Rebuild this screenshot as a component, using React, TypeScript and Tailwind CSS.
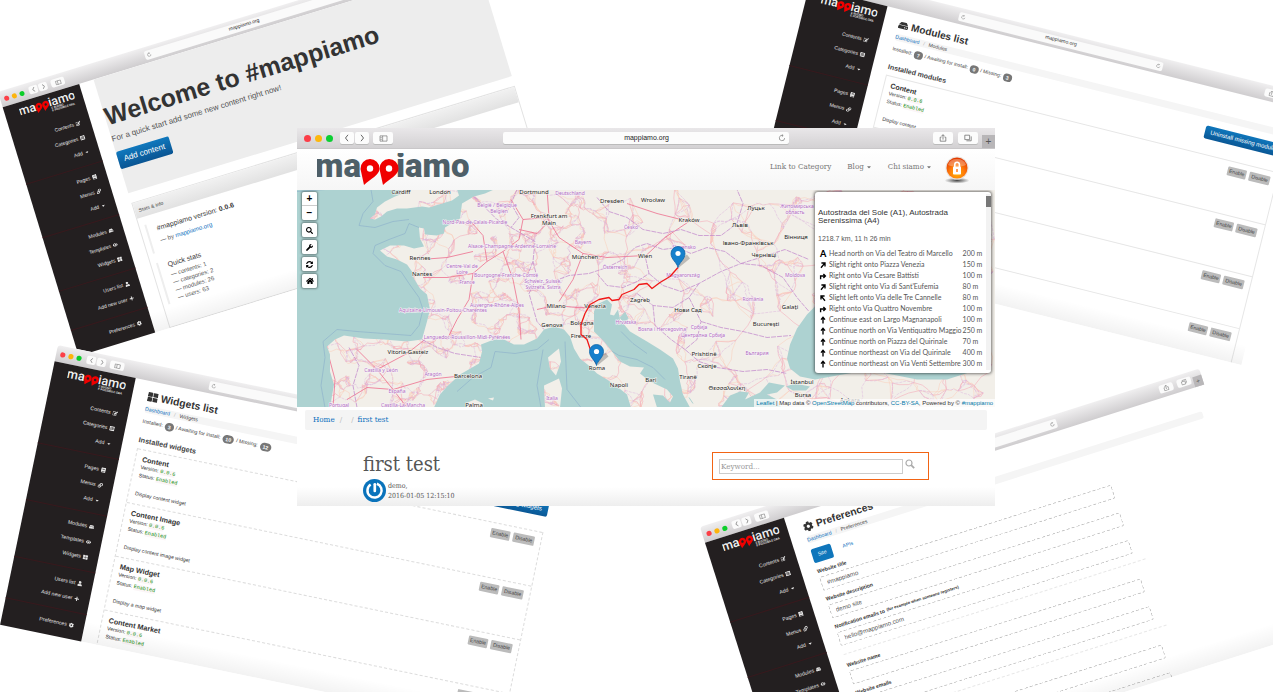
import React from "react";
import {
  FaBook,
  FaCaretDown,
  FaCog,
  FaEdit,
  FaEye,
  FaHdd,
  FaHome,
  FaLink,
  FaListAlt,
  FaPlus,
  FaSearch,
  FaSyncAlt,
  FaThLarge,
  FaUser,
  FaWrench,
} from "react-icons/fa";

/* ---------- shared pieces ---------- */

function Logo({ className, tagline = false }: { className: string; tagline?: boolean }) {
  return (
    <svg viewBox="0 0 152 40" className={className} role="img" aria-label="mappiamo">
      <g fontFamily="Roboto, sans-serif" fontSize="33" fontWeight={tagline ? 500 : 900} fill="currentColor">
        <text x="-2" y="24">ma</text>
        <text x={tagline ? 80 : 79} y="24">iamo</text>
      </g>
      <g fill="#f00000">
        <path d="M53 6a9.500 9.500 0 0 1 9.500 9.500c0 7-9 10-15.500 16.500L43.500 16A9.500 9.500 0 0 1 53 6z" />
        <path d="M72 6a9.500 9.500 0 0 1 9.500 9.500c0 7-9 10-15.500 16.500L62.500 16A9.500 9.500 0 0 1 72 6z" />
      </g>
      <circle cx="53" cy="15.500" r="3.200" fill={tagline ? "#231f20" : "#fff"} />
      <circle cx="72" cy="15.500" r="3.200" fill={tagline ? "#231f20" : "#fff"} />
      {tagline && (
        <g fontFamily="Roboto, sans-serif" fontSize="8" fontWeight="500" fill="currentColor">
          <text x="84" y="32">E BUONO</text>
          <text x="84" y="39">E POSSIBILE ORA</text>
        </g>
      )}
    </svg>
  );
}

function Reload({ className }: { className: string }) {
  return (
    <svg viewBox="0 0 12 12" className={className} fill="none" stroke="#888" strokeWidth="1.200">
      <path d="M10 6.200A4 4 0 1 1 7.500 2.300M5.800 .6l2 1.700-2 1.700" />
    </svg>
  );
}

function SmallChrome() {
  const btn = "flex h-2 items-center justify-center rounded-[2px] bg-[#fbfbfb] text-[#888]";
  return (
    <div className="flex h-4 shrink-0 items-center rounded-t-[3px] bg-linear-to-b from-[#f0eff0] to-[#cfcdcf] pl-1">
      <span className="size-[5px] rounded-full bg-[#fc4048]" />
      <span className="ml-[3px] size-[5px] rounded-full bg-[#fdb40c]" />
      <span className="ml-[3px] size-[5px] rounded-full bg-[#0cce2a]" />
      <div className="ml-[5px] flex gap-px">
        <button aria-label="Back" className={btn + " w-[9px]"}>
          <svg viewBox="0 0 8 8" className="size-[6px]" fill="none" stroke="currentColor"><path d="M5 1L2.500 4 5 7" /></svg>
        </button>
        <button aria-label="Forward" className={btn + " w-[9px]"}>
          <svg viewBox="0 0 8 8" className="size-[6px]" fill="none" stroke="currentColor"><path d="M3 1l2.500 3L3 7" /></svg>
        </button>
      </div>
      <button aria-label="Sidebar" className={btn + " ml-1 w-[14px]"}>
        <svg viewBox="0 0 10 8" className="h-[5px] w-[7px]" fill="none" stroke="currentColor"><path d="M1 1h8v6H1zM4 1v6" /></svg>
      </button>
      <div className="ml-[84px] flex h-[9px] w-[208px] items-center justify-between rounded-[2px] bg-[#fafafa] px-[2px] text-[5px] text-[#333]">
        <Reload className="size-[5px]" />
        mappiamo.org
        <Reload className="size-[5px]" />
      </div>
      <button aria-label="Share" className={btn + " ml-auto w-[14px]"}>
        <svg viewBox="0 0 10 10" className="size-[6px]" fill="none" stroke="currentColor"><path d="M3 4H1.500v5h7V4H7M5 7V1M3 2.500L5 1l2 1.500" /></svg>
      </button>
      <button aria-label="Tabs" className={btn + " ml-1 w-[14px]"}>
        <svg viewBox="0 0 10 10" className="size-[6px]" fill="none" stroke="currentColor"><path d="M1 3.500h6v5H1zM3 3V1.500h6v5H7.500" /></svg>
      </button>
      <span className="ml-[2px] flex h-[10px] w-[9px] items-center justify-center self-end bg-[#b9b7b9] text-[6px] text-[#555]">+</span>
    </div>
  );
}

const menu = [
  [
    { label: "Contents", icon: FaEdit },
    { label: "Categories", icon: FaListAlt },
    { label: "Add", icon: FaCaretDown },
  ],
  [
    { label: "Pages", icon: FaBook },
    { label: "Menus", icon: FaLink },
    { label: "Add", icon: FaCaretDown },
  ],
  [
    { label: "Modules", icon: FaHdd },
    { label: "Templates", icon: FaEye },
    { label: "Widgets", icon: FaThLarge },
  ],
  [
    { label: "Users list", icon: FaUser },
    { label: "Add new user", icon: FaPlus },
  ],
  [{ label: "Preferences", icon: FaCog }],
];

function Sidebar() {
  return (
    <nav className="flex w-20 shrink-0 flex-col bg-[#231f20] text-[5px] text-[#e4e4e4]">
      <div className="flex h-[25px] justify-end pt-1 pr-2">
        <Logo tagline className="h-[15px] w-[57px] text-[#f0f0f0]" />
      </div>
      {menu.map((group, i) => (
        <ul key={i} className="border-b border-[#38191d] py-[5px] pr-[10px] last:border-0">
          {group.map(({ label, icon: Icon }) => (
            <li key={label}>
              <a href="#" className="flex h-[15px] items-center justify-end gap-[2px]">
                {label} <Icon className="size-[5px]" />
              </a>
            </li>
          ))}
        </ul>
      ))}
    </nav>
  );
}

function AdminWindow({ className, children }: { className: string; children: React.ReactNode }) {
  return (
    <section className={"absolute flex h-[276px] w-[506px] origin-top-left flex-col bg-white " + className}>
      <SmallChrome />
      <div className="flex min-h-0 flex-1">
        <Sidebar />
        <div className="relative flex min-w-0 flex-1 flex-col overflow-hidden pr-[10px] pl-[15px]">
          {children}
          <div className="pointer-events-none absolute inset-x-0 bottom-0 h-5 bg-linear-to-b from-transparent to-black/5" />
        </div>
      </div>
    </section>
  );
}

function PageHead({ icon, title, crumb }: { icon: React.ReactNode; title: string; crumb: string }) {
  return (
    <header>
      <h2 className="flex h-6 items-center gap-[3px] pt-[5px] text-[10px] leading-3 font-bold text-[#333]">
        {icon}
        {title}
      </h2>
      <div className="flex h-[7px] items-center gap-1 rounded-[2px] bg-[#f5f5f5] text-[5px] leading-[7px] text-[#444]">
        <a href="#" className="text-[#0a6ebd]">Dashboard</a>
        <span className="text-[#bbb]">/</span>
        {crumb}
      </div>
    </header>
  );
}

/* ---------- admin windows ---------- */

function WelcomeWindow() {
  return (
    <AdminWindow className="top-[92px] left-[-2px] rotate-[-17deg]">
      <div className="flex h-[119px] shrink-0 flex-col items-start bg-[#ededed] pt-[26px]">
        <h1 className="text-[25px] leading-[26px] font-bold whitespace-nowrap text-[#333]">Welcome to #mappiamo</h1>
        <p className="mt-[6px] text-[8px] leading-[10px] text-[#555]">For a quick start add some new content right now!</p>
        <button className="mt-2 h-[18px] rounded-[2px] bg-linear-to-b from-[#1078bd] to-[#0a5593] px-[6px] text-[8px] text-white">
          Add content
        </button>
      </div>
      <div className="mt-[10px] flex flex-1 flex-col border border-[#e3e3e3] bg-white">
        <div className="h-4 bg-linear-to-b from-[#f1f1f1] to-[#e2e2e2] pl-1 text-[5px] leading-4 text-[#444]">Stats &amp; info</div>
        <div className="mt-2 ml-[5px] h-[30px] border-l-2 border-[#eee] pt-[2px] pl-[9px] text-[6px] text-[#555]">
          <h3 className="text-[7px] leading-[10px] text-[#333]">
            #mappiamo version: <b>0.0.6</b>
          </h3>
          <p className="mt-[3px] leading-2">
            — by <a href="#" className="text-[#0a6ebd]">mappiamo.org</a>
          </p>
        </div>
        <div className="mt-[10px] ml-[5px] border-l-2 border-[#eee] pl-[9px] text-[6px] leading-2 text-[#555]">
          <h3 className="mb-[2px] text-[7px] leading-[9px] text-[#333]">Quick stats</h3>
          <ul>
            <li>— contents: 1</li>
            <li>— categories: 2</li>
            <li>— modules: 26</li>
            <li>— users: 63</li>
          </ul>
        </div>
      </div>
    </AdminWindow>
  );
}

type ListProps = {
  className: string;
  kind: string;
  icon: React.ReactNode;
  counts: number[];
  items: { name: string; text: string }[];
  dashed?: boolean;
};

function ListWindow({ className, kind, icon, counts, items, dashed = false }: ListProps) {
  const line = dashed ? "border-dashed border-[#ddd]" : "border-[#e6e6e6]";
  const badge = "rounded-full bg-[#777] px-[3px] text-[5px] leading-2 font-bold text-white";
  return (
    <AdminWindow className={className}>
      <PageHead icon={icon} title={kind + " list"} crumb={kind} />
      <div className="flex h-[35px] shrink-0 justify-between">
        <div className="pt-1">
          <p className="flex h-[10px] items-center gap-[2px] text-[5px] text-[#444]">
            Installed: <span className={badge}>{counts[0]}</span> / Awaiting for install:{" "}
            <span className={badge}>{counts[1]}</span> / Missing: <span className={badge}>{counts[2]}</span>
          </p>
          <h3 className="mt-2 text-[7px] leading-[10px] font-bold text-[#444]">Installed {kind.toLowerCase()}</h3>
        </div>
        <button className="mt-[7px] h-[13px] rounded-[2px] bg-linear-to-b from-[#0f76bb] to-[#0a5896] px-[6px] text-[6px] text-white">
          Uninstall missing {kind.toLowerCase()}
        </button>
      </div>
      <ul className={"flex flex-1 flex-col border-x " + line}>
        {items.map((item) => (
          <li key={item.name} className={"flex h-[53px] shrink-0 items-start justify-between border-t pt-[5px] pr-[6px] pl-[6px] " + line}>
            <div className="text-[5px] leading-[7px] text-[#333]">
              <h4 className="text-[7px] leading-2 font-bold">{item.name}</h4>
              <p>Version: <code className="bg-[#fbf5f7] text-[#0a8f0a]">0.0.6</code></p>
              <p>Status: <code className="bg-[#fbf5f7] text-[#0a8f0a]">Enabled</code></p>
              <p className="mt-[10px]">{item.text}</p>
            </div>
            <div className="flex gap-[3px] text-[5px] leading-[9px] text-[#444]">
              <button className="rounded-[1px] bg-[#bbb] px-[2px]">Enable</button>
              <button className="rounded-[1px] bg-[#bbb] px-[2px]">Disable</button>
            </div>
          </li>
        ))}
      </ul>
    </AdminWindow>
  );
}

function Field({ id, label, note, value = "" }: { id: string; label: string; note?: string; value?: string }) {
  return (
    <div className="flex h-7 w-[296px] flex-col">
      <label htmlFor={id} className="flex h-[14px] items-end pb-[3px] text-[5px] leading-[6px] font-bold text-[#333]">
        {label} {note && <span className="ml-[2px] text-[4px]">{note}</span>}
      </label>
      <input id={id} defaultValue={value} className="h-[14px] w-full rounded-[2px] border border-dashed border-[#c4c4c4] bg-transparent px-[5px] text-[6px] text-[#555]" />
    </div>
  );
}

function PreferencesWindow() {
  return (
    <AdminWindow className="top-[527px] left-[700px] scale-[1.035] rotate-[-17.6deg]">
      <PageHead icon={<FaCog className="size-[10px]" />} title="Preferences" crumb="Preferences" />
      <div className="mt-[6px] flex h-[14px] shrink-0 items-stretch text-[5px]">
        <button className="w-5 rounded-[2px] bg-[#0f76bb] text-white">Site</button>
        <button className="ml-[6px] w-5 text-[#0a6ebd]">APIs</button>
      </div>
      <Field id="site-title" label="Website title" value="#mappiamo" />
      <Field id="site-description" label="Website description" value="demo site" />
      <Field id="site-notify" label="Notification emails to" note="(for example when someone registers)" value="hello@mappiamo.com" />
      <hr className="mt-2 mb-[2px] w-[306px] border-dashed border-[#e8e8e8]" />
      <Field id="site-name" label="Website name" />
      <Field id="site-email" label="Website emails" />
      <hr className="mt-2 mb-[2px] w-[306px] border-dashed border-[#e8e8e8]" />
      <Field id="site-language" label="Language" />
      <Field id="site-domain" label="Domain" />
    </AdminWindow>
  );
}

/* ---------- map ---------- */

const LAND =
  "M197 0L188 4 177 7 165 14 163 29 148 38 147 44 140 46 128 45 127 39 122 38 123 49 127 57 117 59 107 56 93 56 83 61 90 67 100 70 110 75 115 82 117 89 123 99 130 105 133 120 130 132 125 150 110 152 87 150 67 149 47 146 38 150 30 157 33 165 33 182 37 195 33 218H137L143 205 150 197 163 185 182 174 185 162 184 155 197 150 207 150 217 155 227 155 240 149 247 140 257 137 267 140 273 147 277 159 283 169 293 177 300 184 310 190 320 197 330 205 334 218H360L356 205 366 206 373 213 376 207 370 200 353 192 343 184 347 178 333 177 323 172 315 162 307 152 297 142 297 132 297 122 300 115 310 110 315 115 313 125 317 126 321 120 323 130 333 142 350 152 363 160 376 169 381 179 383 192 386 205 393 218H698V0z" +
  "M104 0L106 4 98 7 88 12 80 18 78 25 73 29 78 30 84 27 90 22 100 19 110 19 125 17 132 18 145 14 155 11 162 6 160 0z" +
  "M262 159L264 172 259 186 253 179 251 168 257 163z" +
  "M247 196L262 189 265 199 263 218H248z" +
  "M168 214L178 210 186 214 184 218H170zM191 209L197 208 196 211z";

const WATER =
  "M523 112L510 125 500 139 493 155 490 169 493 179 503 187 518 190 540 186 575 180 590 184 620 190 650 190 675 182 690 170 690 112z" +
  "M424 218L433 206 443 202 452 203 448 210 463 203 472 193 488 196 480 203 470 205 480 210 484 218z" +
  "M489 197L498 194 513 197 509 201 496 201z";

function makeRoads() {
  let seed = 11;
  const rnd = () => {
    seed = (seed * 16807) % 2147483647;
    return seed / 2147483647;
  };
  const pts: [number, number][] = [];
  while (pts.length < 900) {
    const x = rnd() * 698;
    const y = rnd() * 218;
    const density = x < 340 ? 1 : 0.4;
    if (rnd() < density) pts.push([x, y]);
  }
  const out = ["", "", ""];
  pts.forEach(([x, y], i) => {
    const near = pts
      .map((p, j) => ({ j, d: (p[0] - x) ** 2 + (p[1] - y) ** 2 }))
      .filter((n) => n.j !== i)
      .sort((a, b) => a.d - b.d)
      .slice(0, 4);
    near.forEach((n, k) => {
      if (n.d > 1100) return;
      const [a, b] = pts[n.j];
      const jit = () => (rnd() - 0.5) * 4;
      const seg = `M${x.toFixed(1)} ${y.toFixed(1)}L${(x + (a - x) / 3 + jit()).toFixed(1)} ${(y + (b - y) / 3 + jit()).toFixed(1)} ${(x + ((a - x) * 2) / 3 + jit()).toFixed(1)} ${(y + ((b - y) * 2) / 3 + jit()).toFixed(1)} ${a.toFixed(1)} ${b.toFixed(1)}`;
      out[(i + k) % 3] += seg;
    });
  });
  return out;
}
const ROADS = makeRoads();

const BORDERS =
  "M177 7L192 22 200 30 214 38 226 45 238 52 236 72 228 92 238 98 256 92 272 86 292 84 310 78 326 70 338 58 350 54 366 60 380 58 394 64 410 58 428 62 444 74M236 72L240 88 232 104 236 118 240 132 247 140M125 150L140 158 158 164 184 168M220 0L214 14 222 28 214 38M300 8L312 22 330 28 346 40 366 44 384 40 402 46 424 46 440 34 446 14 440 0M300 84L310 96 326 98 340 92 352 84 348 66M352 84L366 96 384 102 402 94 424 82 444 74 464 76 486 88 500 108 512 122M340 104L356 116 376 118 392 108 402 94M356 116L358 136 374 150 388 160 400 150 404 132 392 108M404 132L424 138 446 142 470 148 494 146M388 160L402 172 420 178 446 182 470 180 490 184M60 218L56 196 62 176 52 158M444 74L470 66 488 60 512 70";

const RAIL =
  "M214 10L226 30 222 50 206 62 190 72 176 84 172 110 160 130 150 150M226 30L250 28 262 48 286 64 310 68 348 66M176 62L150 68 124 70M176 84L150 88 126 88M206 62L216 90 222 120 224 150M222 40L240 44 252 32M240 120L258 116 280 118 300 118M60 160L80 180 96 200 110 218M96 200L70 198 50 210M96 200L130 190 168 186M80 180L110 164 128 150M30 160L38 190 36 218M250 0L252 28M286 64L276 90 262 112M190 72L186 46 172 30 M392 32L360 24 330 14M349 66L368 48 392 32";

const cities: [number, number, string][] = [
  [104, 4, "Cardiff"], [143, 4, "London"], [237, 4, "Dortmund"], [315, 13, "Dresden"], [356, 12, "Wrocław"],
  [252, 28, "Frankfurt am"], [252, 35, "Main"], [392, 32, "Kraków"], [459, 20, "Луцьк"], [443, 37, "Львів"],
  [499, 49, "Вінниця"], [451, 55, "Івано-Франківськ"], [467, 67, "Чернівці"], [123, 70, "Rennes"], [125, 86, "Nantes"],
  [288, 69, "München"], [348, 68, "Wien"], [259, 118, "Milano"], [298, 118, "Venezia"], [343, 112, "Zagreb"],
  [255, 137, "Genova"], [285, 135, "Bologna"], [284, 148, "Firenze"], [300, 180, "Roma"], [322, 197, "Napoli"],
  [111, 164, "Vitoria-Gasteiz"], [171, 188, "Barcelona"], [177, 217, "Palma"], [391, 122, "Нови Сад"], [493, 119, "Galați"],
  [469, 136, "București"], [407, 166, "Prishtinë"], [410, 178, "Скопје"], [391, 189, "Tiranë"], [430, 200, "Θεσσαλονίκη"],
  [354, 192, "Bari"], [505, 194, "İstanbul"], [506, 207, "Bursa"], [553, 212, "Ankara"],
];

const regions: [number, number, string][] = [
  [273, 5, "Deutschland"], [200, 17, "België / Belgique"], [202, 23, "Belgien"], [178, 34, "Nord-Pas-de-Calais-Picardie"],
  [215, 58, "Alsace-Champagne-Ardenne-Lorraine"], [334, 39, "Česko"], [286, 54, "Bayern"], [318, 79, "Österreich"],
  [165, 78, "Centre-Val de"], [165, 84, "Loire"], [209, 87, "Bourgogne-Franche-Comté"], [170, 94, "France"],
  [246, 93, "Schweiz, Suisse,"], [246, 99, "Svizzera, Svizra"], [200, 117, "Auvergne-Rhône-Alpes"],
  [146, 122, "Aquitaine-Limousin-Poitou-Charentes"], [170, 149, "Languedoc-Roussillon-Midi-Pyrénées"],
  [329, 134, "Hrvatska"], [365, 141, "Bosna i Hercegovina"], [402, 139, "Србија"], [406, 147, "Централна Србија"],
  [84, 182, "Castilla y León"], [136, 186, "Aragón"], [100, 203, "España"], [42, 217, "Portugal"], [106, 217, "Castilla-La Mancha"],
  [255, 210, "Italia"], [387, 59, "Slovensko"], [386, 87, "Magyarország"], [456, 111, "România"], [498, 87, "Moldova"],
  [460, 165, "България"], [500, 18, "Житомирська"], [498, 24, "область"],
];

function Marker({ x, y }: { x: number; y: number }) {
  return (
    <g transform={`translate(${x} ${y})`}>
      <path d="M1 0L12 -9 9 -13 2 -8z" fill="#000" opacity=".22" />
      <path d="M0 0C-1-5-7-8-7-14A7 7 0 0 1 7-14C7-8 1-5 0 0z" fill="#1680cc" stroke="#0f66a8" strokeWidth=".8" />
      <circle cy="-14" r="2.600" fill="#fff" />
    </g>
  );
}

function MapDrawing() {
  return (
    <svg viewBox="0 0 698 218" preserveAspectRatio="xMidYMid slice" className="absolute inset-0 size-full bg-[#add2d1]">
      <defs>
        <clipPath id="land"><path d={LAND} /></clipPath>
      </defs>
      <g fill="none" stroke="#8fb3cc" strokeWidth=".7">
        <path d="M0 2L28 0M112 30L96 32 78 38 62 36 66 24 76 12 74 0M122 38L112 34 108 44 92 50 78 56 76 64 88 76 104 82 112 94 122 108 126 120 122 136 114 146 60 142 40 140 26 152 28 168 24 196 28 218M160 202L176 188 194 178 198 162 218 164 240 160 252 150M244 218L240 196 246 160M268 152L270 200 284 218M350 164L336 154 324 142 M312 160L322 166 340 170 356 178 368 190 M510 140L500 160 502 176" />
      </g>
      <path d={LAND} fill="#f2efe9" />
      <g clipPath="url(#land)" fill="none">
        <path d={ROADS[0]} stroke="#f5a3b2" strokeWidth=".5" />
        <path d={ROADS[1]} stroke="#fbcdb9" strokeWidth=".5" />
        <path d={ROADS[2]} stroke="#dcb4dc" strokeWidth=".5" strokeDasharray="3 1" />
        <path d={RAIL} stroke="#ee6f8e" strokeWidth=".8" />
        <path d={BORDERS} stroke="#c58fce" strokeWidth=".8" strokeDasharray="5 1" />
      </g>
      <path d={WATER} fill="#add2d1" />
      <path d="M323 128l5-5 3 6-4 4zM392 208l4 6" fill="#add2d1" stroke="#add2d1" />
      <g fontFamily="'Noto Sans', sans-serif" textAnchor="middle" paintOrder="stroke" strokeWidth="1.200" strokeLinejoin="round">
        <g fontSize="5" fill="#b06cc0" stroke="#f8f3f8">
          {regions.map(([x, y, t]) => <text key={t} x={x} y={y}>{t}</text>)}
        </g>
        <g fontSize="6" fill="#222" stroke="#f7f4ef">
          {cities.map(([x, y, t]) => <text key={t} x={x} y={y}>{t}</text>)}
        </g>
      </g>
      <path
        d="M299 174L293 159 290 150 284 145 284 135 288 124 293 115 302 110 312 108 315 111 322 110 325 105 337 100 342 95 350 94 355 99 363 93 373 87 381 78"
        fill="none" stroke="#f01818" strokeWidth="1.300" strokeLinejoin="round"
      />
      <Marker x={299.5} y={176} />
      <Marker x={381} y={78} />
    </svg>
  );
}

const arrows: Record<string, string> = {
  right: "M2 9V5h5M5.500 2.500L8 5 5.500 7.500",
  slightRight: "M2.500 8.500L7 3M3 2.500h4.500V7",
  slightLeft: "M7.500 8.500L3 3M7 2.500H2.500V7",
  up: "M5 9.500V2M2.500 4.500L5 1.500l2.500 3",
};

const steps: [string, string, string][] = [
  ["head", "Head north on Via del Teatro di Marcello", "200 m"],
  ["slightRight", "Slight right onto Piazza Venezia", "150 m"],
  ["right", "Right onto Via Cesare Battisti", "100 m"],
  ["slightRight", "Slight right onto Via di Sant'Eufemia", "80 m"],
  ["slightLeft", "Slight left onto Via delle Tre Cannelle", "80 m"],
  ["right", "Right onto Via Quattro Novembre", "100 m"],
  ["up", "Continue east on Largo Magnanapoli", "100 m"],
  ["up", "Continue north on Via Ventiquattro Maggio", "250 m"],
  ["up", "Continue north on Piazza del Quirinale", "70 m"],
  ["up", "Continue northeast on Via del Quirinale", "400 m"],
  ["up", "Continue northeast on Via Venti Settembre", "300 m"],
];

function Directions() {
  return (
    <aside className="absolute top-[2px] right-1 flex w-[176px] justify-between rounded-[3px] bg-white shadow-[0_0_3px_1px_rgba(0,0,0,0.5)]">
      <div className="pt-[17px] pb-1 pl-[3px] text-[#555]">
        <h2 className="text-[8px] leading-2 font-medium text-[#333]">
          Autostrada del Sole (A1), Autostrada
          <br />
          Serenissima (A4)
        </h2>
        <p className="mt-[10px] mb-[5px] text-[7px] leading-2">1218.7 km, 11 h 26 min</p>
        <table className="font-['Lato',sans-serif] text-[7px] whitespace-nowrap">
          <tbody>
            {steps.map(([dir, text, dist]) => (
              <tr key={text} className="h-[11px] leading-[11px]">
                <td className="w-[11px] p-0 text-[9px] font-black text-black">
                  {dir === "head" ? (
                    <span className="pl-[2px]">A</span>
                  ) : (
                    <svg viewBox="0 0 10 10" className="ml-px size-2" fill="none" stroke="#000" strokeWidth="1.700"><path d={arrows[dir]} /></svg>
                  )}
                </td>
                <td className="w-[127px] p-0 pr-px">{text}</td>
                <td className="p-0">{dist}</td>
              </tr>
            ))}
          </tbody>
        </table>
      </div>
      <div className="mt-[2px] mb-[3px] w-[5px] bg-[#f2f2f2]">
        <div className="mt-[2px] h-[11px] bg-[#777]" />
      </div>
    </aside>
  );
}

function MapControls() {
  const btn = "flex h-[14px] w-[15px] items-center justify-center bg-white text-[10px] leading-none font-bold text-black";
  const box = "overflow-hidden rounded-[2px] shadow-[0_0_2px_1px_rgba(0,0,0,0.35)]";
  return (
    <div className="absolute top-[2px] left-[5px] flex flex-col gap-[3px]">
      <div className={box}>
        <button className={btn + " border-b border-[#ccc]"}>+</button>
        <button className={btn}>−</button>
      </div>
      <div className={box}><button aria-label="Search" className={btn}><FaSearch className="size-[7px]" /></button></div>
      <div className={box}><button aria-label="Tools" className={btn}><FaWrench className="size-[7px]" /></button></div>
      <div className={box}><button aria-label="Refresh" className={btn}><FaSyncAlt className="size-[7px]" /></button></div>
      <div className={box}><button aria-label="Home" className={btn}><FaHome className="size-2" /></button></div>
    </div>
  );
}

/* ---------- front window ---------- */

function MainChrome() {
  const btn = "flex h-[12px] items-center justify-center rounded-[2px] bg-[#fcfcfc] text-[#666] shadow-[0_1px_0_#bbb]";
  return (
    <div className="flex h-[21px] items-center border-b border-[#c9c7c9] bg-linear-to-b from-[#e9e7e9] to-[#d3d1d3] pl-[7px]">
      <div className="flex gap-1">
        <span className="size-[7px] rounded-full bg-[#fc3d48]" />
        <span className="size-[7px] rounded-full bg-[#fdb70d]" />
        <span className="size-[7px] rounded-full bg-[#0ccf33]" />
      </div>
      <div className="ml-[7px] flex gap-px">
        <button aria-label="Back" className={btn + " w-[14px]"}>
          <svg viewBox="0 0 8 8" className="size-2" fill="none" stroke="currentColor"><path d="M5 .8L2.500 4 5 7.200" /></svg>
        </button>
        <button aria-label="Forward" className={btn + " w-[14px]"}>
          <svg viewBox="0 0 8 8" className="size-2" fill="none" stroke="currentColor"><path d="M3 .8L5.500 4 3 7.200" /></svg>
        </button>
      </div>
      <button aria-label="Sidebar" className={btn + " ml-1 w-5"}>
        <svg viewBox="0 0 10 8" className="h-[7px] w-[9px]" fill="none" stroke="currentColor" strokeWidth=".7"><path d="M1 1h8v6H1zM4 1v6M1.500 3H3M1.500 5H3" /></svg>
      </button>
      <div className="ml-[110px] flex h-[12px] flex-1 items-center rounded-[2px] bg-[#fcfcfc] pr-[3px] pl-3 text-[7px] text-[#222] shadow-[0_1px_0_#bbb]">
        <span className="flex-1 text-center">mappiamo.org</span>
        <Reload className="size-2" />
      </div>
      <button aria-label="Share" className={btn + " ml-[144px] w-5"}>
        <svg viewBox="0 0 10 10" className="size-2" fill="none" stroke="currentColor" strokeWidth=".9"><path d="M3 4H1.500v5h7V4H7M5 7V1M3 2.500L5 1l2 1.500" /></svg>
      </button>
      <button aria-label="Tabs" className={btn + " ml-[5px] w-5"}>
        <svg viewBox="0 0 10 10" className="size-2" fill="none" stroke="currentColor" strokeWidth=".9"><path d="M1 1.500h6v5.500H1zM3 8.500h6V3" /></svg>
      </button>
      <button aria-label="New tab" className="ml-[4px] flex h-[13px] w-[13px] items-center justify-center self-end bg-[#b8b6b8] text-[10px] leading-none text-[#555]">+</button>
    </div>
  );
}

function LockBadge() {
  return (
    <svg viewBox="0 0 26 28" className="h-7 w-[26px]" role="img" aria-label="Login">
      <defs>
        <radialGradient id="orb" cx=".5" cy=".75" r=".7">
          <stop offset="0" stopColor="#ffb400" />
          <stop offset=".5" stopColor="#ff7a0a" />
          <stop offset="1" stopColor="#e23c00" />
        </radialGradient>
        <radialGradient id="shade">
          <stop offset="0" stopColor="#333" stopOpacity=".9" />
          <stop offset="1" stopColor="#333" stopOpacity="0" />
        </radialGradient>
      </defs>
      <ellipse cx="13" cy="24.500" rx="12.500" ry="3" fill="url(#shade)" />
      <circle cx="13" cy="12" r="11.500" fill="#e9e2dc" />
      <circle cx="13" cy="12" r="10.500" fill="url(#orb)" />
      <path d="M4 9a9.300 8 0 0 1 18 0c-5 2-13 2-18 0z" fill="#fff" opacity=".3" />
      <path d="M10.800 11V8.500a2.300 2.300 0 0 1 4.600 0V11" fill="none" stroke="#fff" strokeWidth="1.600" />
      <rect x="9" y="10.500" width="8" height="8" rx=".8" fill="#fff" />
      <path d="M13 13v3" stroke="#f60" strokeWidth="1.300" />
    </svg>
  );
}

const serif = "font-['DejaVu_Serif_Condensed','DejaVu_Serif',serif]";

function MainWindow() {
  return (
    <main className="absolute top-[128px] left-[297px] flex h-[378px] w-[698px] flex-col bg-white">
      <MainChrome />
      <header className="flex h-[41px] shrink-0 items-start justify-between bg-linear-to-b from-white to-[#f6f6f6] pr-[25px] pl-[20px]">
        <Logo className="mt-1 h-10 w-[152px] text-[#4e5f68]" />
        <nav className={"flex h-[36px] items-center gap-4 text-[8px] text-[#777] " + serif}>
          <a href="#">Link to Category</a>
          <a href="#" className="flex items-center gap-[2px]">Blog <FaCaretDown className="size-[6px]" /></a>
          <a href="#" className="flex items-center gap-[2px]">Chi siamo <FaCaretDown className="size-[6px]" /></a>
          <a href="#" className="mt-[5px] ml-[-4px]"><LockBadge /></a>
        </nav>
      </header>
      <div className="relative h-[217px] shrink-0 overflow-hidden">
        <MapDrawing />
        <MapControls />
        <Directions />
        <p className="absolute right-0 bottom-0 bg-white/70 px-[2px] text-[6px] leading-2 text-[#333]">
          <a href="#" className="text-[#0078a8]">Leaflet</a> | Map data © <a href="#" className="text-[#0078a8]">OpenStreetMap</a> contributors,{" "}
          <a href="#" className="text-[#0078a8]">CC-BY-SA</a>, Powered by © <a href="#" className="text-[#0078a8]">#mappiamo</a>
        </p>
      </div>
      <nav className={"mx-2 mt-[3px] flex h-5 shrink-0 items-center rounded-[2px] bg-[#f4f4f4] px-2 text-[8px] text-[#bbb] " + serif}>
        <a href="#" className="text-[#0a6ebd]">Home</a>
        <span className="ml-[5px]">/</span>
        <span className="ml-[9px]">/</span>
        <a href="#" className="ml-1 text-[#0a6ebd]">first test</a>
      </nav>
      <div className={"flex flex-1 items-start justify-between bg-linear-to-b from-white from-75% to-[#eeeeee] pt-[22px] pr-[66px] pl-[66px] text-[#555] " + serif}>
        <article>
          <h1 className="text-[20px] leading-6">first test</h1>
          <div className="mt-[3px] flex items-center gap-[2px]">
            <svg viewBox="0 0 24 24" className="size-[23px]">
              <circle cx="12" cy="12" r="12" fill="#0a73bb" />
              <path d="M8 5.800A7.400 7.400 0 1 0 14.500 5" fill="none" stroke="#fff" strokeWidth="2.600" />
              <path d="M12.300 5.500v7" stroke="#fff" strokeWidth="2.800" strokeLinecap="round" />
            </svg>
            <p className="text-[7px] leading-[10px]">
              demo,
              <br />
              2016-01-05 12:15:10
            </p>
          </div>
        </article>
        <form className="flex h-7 w-[217px] items-center border border-[#f26414] pl-[6px]">
          <input aria-label="Keyword" placeholder="Keyword..." className="h-[15px] w-[184px] border border-[#ccc] bg-white px-px text-[8px] placeholder:text-[#999]" />
          <button type="button" aria-label="Search" className="ml-[2px] pb-1">
            <svg viewBox="0 0 10 10" className="size-[10px]" fill="none" stroke="#aaa" strokeWidth="1.200"><circle cx="4" cy="4" r="3" /><path d="M6.200 6.200L9.200 9.200" strokeWidth="1.800" /></svg>
          </button>
        </form>
      </div>
    </main>
  );
}

export default function App() {
  return (
    <div className="relative min-h-screen w-full overflow-hidden bg-white font-['Liberation_Sans',Arial,sans-serif]">
      <WelcomeWindow />
      <ListWindow
        className="top-[-29px] left-[813px] scale-[1.01] rotate-[14deg]"
        kind="Modules"
        icon={<FaHdd className="size-[10px]" />}
        counts={[7, 0, 3]}
        items={[
          { name: "Content", text: "Display content" },
          { name: "Categories", text: "Display categories" },
          { name: "Map", text: "Display a map" },
          { name: "Menu", text: "Display a menu" },
        ]}
      />
      <PreferencesWindow />
      <ListWindow
        className="top-[345px] left-[58px] scale-[1.035] rotate-[11.7deg]"
        kind="Widgets"
        icon={<FaThLarge className="size-[10px]" />}
        counts={[3, 10, 12]}
        dashed
        items={[
          { name: "Content", text: "Display content widget" },
          { name: "Content Image", text: "Display content image widget" },
          { name: "Map Widget", text: "Display a map widget" },
          { name: "Content Market", text: "Display a market widget" },
        ]}
      />
      <MainWindow />
    </div>
  );
}
